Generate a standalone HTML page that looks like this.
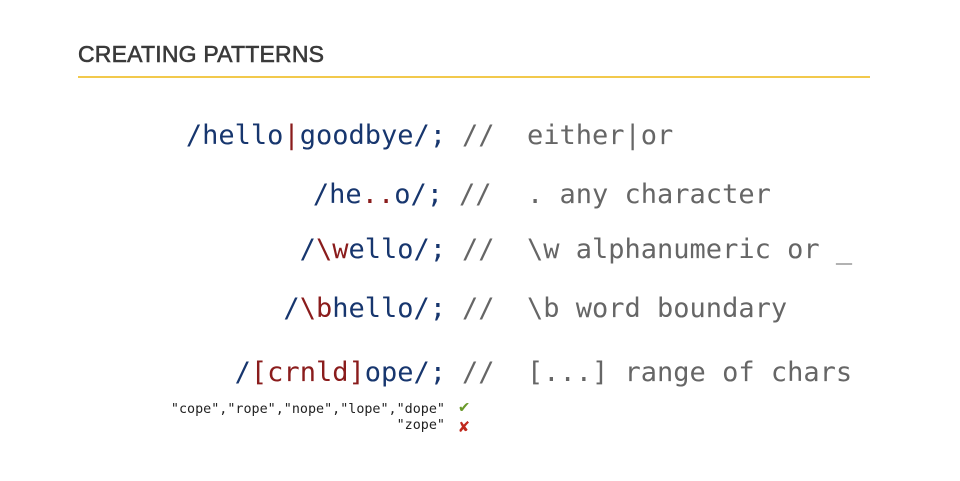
<!DOCTYPE html>
<html><head><meta charset="utf-8"><style>
body{margin:0;width:960px;height:481px;background:#fff;position:relative;overflow:hidden;font-family:"DejaVu Sans Mono",monospace}
.t{position:absolute;left:78px;top:41px;font:23px "Liberation Sans",sans-serif;color:#3a3a3a;-webkit-text-stroke:0.6px #3a3a3a;letter-spacing:0.2px}
.ln{position:absolute;left:78px;top:76px;width:792px;height:2px;background:#f2c94c}
.r{position:absolute;font-size:27px;line-height:1;white-space:pre}
.l{right:514px;color:#17366e}
.c{left:462px;color:#666}
.d{left:527px;color:#666}
.red{color:#8a1c1c}
.s{position:absolute;right:515px;font-size:13.4px;color:#222;white-space:pre;text-align:right;line-height:1}
.m{position:absolute;left:459px;font-size:17px;font-weight:bold}
</style></head><body>
<div class="t">CREATING PATTERNS</div>
<div class="ln"></div>
<div class="r l" style="top:122px">/hello<span class="red">|</span>goodbye/;</div>
<div class="r c" style="top:122px">//</div>
<div class="r d" style="top:122px">either|or</div>
<div class="r l" style="top:181px;right:517px">/he<span class="red">..</span>o/;</div>
<div class="r c" style="top:181px;left:459px">//</div>
<div class="r d" style="top:181px">. any character</div>
<div class="r l" style="top:236px">/<span class="red">\w</span>ello/;</div>
<div class="r c" style="top:236px">//</div>
<div class="r d" style="top:236px">\w alphanumeric or _</div>
<div class="r l" style="top:295px">/<span class="red">\b</span>hello/;</div>
<div class="r c" style="top:295px">//</div>
<div class="r d" style="top:295px">\b word boundary</div>
<div class="r l" style="top:359px">/<span class="red">[crnld]</span>ope/;</div>
<div class="r c" style="top:359px">//</div>
<div class="r d" style="top:359px">[...] range of chars</div>
<div class="s" style="top:403px">"cope","rope","nope","lope","dope"</div>
<div class="s" style="top:419px">"zope"</div>
<div class="m" style="top:397px;color:#6a9a2a">✔</div>
<div class="m" style="top:417px;color:#c0281c">✘</div>
</body></html>
